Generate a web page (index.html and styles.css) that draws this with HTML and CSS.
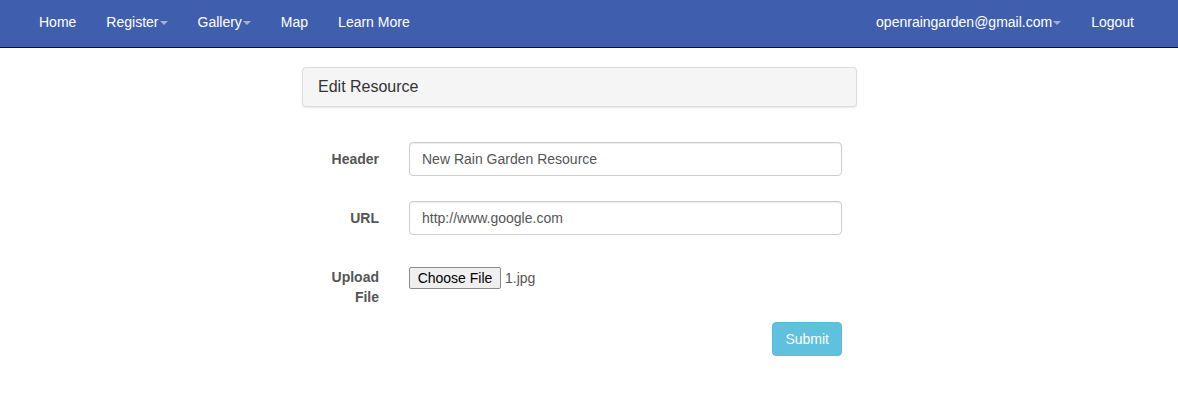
FILE: index.html
```html
<!DOCTYPE html>
<html>
<head>
<meta charset="utf-8">
<link rel="stylesheet" href="styles.css">
</head>
<body>
<nav class="navbar">
  <ul class="nav">
    <li><a href="#">Home</a></li>
    <li><a href="#">Register<span class="caret"></span></a></li>
    <li><a href="#">Gallery<span class="caret"></span></a></li>
    <li><a href="#">Map</a></li>
    <li><a href="#">Learn More</a></li>
  </ul>
  <ul class="nav">
    <li><a href="#">openraingarden@gmail.com<span class="caret"></span></a></li>
    <li><a href="#">Logout</a></li>
  </ul>
</nav>
<main class="page">
  <div class="panel"><h3 class="panel-title">Edit Resource</h3></div>
  <form class="form">
    <div class="row">
      <label class="label">Header</label>
      <div class="field"><input class="input" type="text" value="New Rain Garden Resource"></div>
    </div>
    <div class="row">
      <label class="label">URL</label>
      <div class="field"><input class="input" type="text" value="http://www.google.com"></div>
    </div>
    <div class="row">
      <label class="label">Upload File</label>
      <div class="field file"><button type="button" class="file-btn">Choose File</button><span class="file-name">1.jpg</span></div>
    </div>
    <div class="actions"><button type="button" class="submit">Submit</button></div>
  </form>
</main>
</body>
</html>
```
FILE: styles.css
```css
* { box-sizing: border-box; }
html, body { margin: 0; padding: 0; }
body {
  font-family: "Liberation Sans", Arial, sans-serif;
  font-size: 14px;
  line-height: 20px;
  color: #333;
  background: #fff;
}
.navbar {
  display: flex;
  justify-content: space-between;
  background: #3f5fae;
  border-bottom: 1px solid #111;
  height: 48px;
  padding: 0 29px 0 24px;
}
.nav {
  display: flex;
  list-style: none;
  margin: 0;
  padding: 0;
}
.nav a {
  display: flex;
  align-items: center;
  height: 47px;
  padding: 0 15px 3px;
  color: #fff;
  text-decoration: none;
}
.caret {
  display: inline-block;
  width: 0;
  height: 0;
  margin-left: 1px;
  margin-top: 2px;
  border-top: 4px solid #a7b0c8;
  border-left: 4px solid transparent;
  border-right: 4px solid transparent;
}
.page {
  width: 555px;
  margin-left: 302px;
  padding-top: 19px;
}
.panel {
  background: #f5f5f5;
  border: 1px solid #ddd;
  border-radius: 4px;
  box-shadow: 0 1px 2px rgba(0,0,0,0.1);
  padding: 10px 15px;
}
.panel-title {
  margin: 0;
  font-size: 16px;
  font-weight: normal;
  line-height: 18px;
  color: #333;
}
.form { padding-top: 35px; }
.row {
  display: flex;
  margin-bottom: 25px;
}
.row:nth-child(3) { margin-bottom: 15px; }
.label {
  width: 92px;
  flex: none;
  padding: 7px 15px 0;
  text-align: right;
  font-weight: bold;
  color: #555;
}
.field {
  flex: 1;
  padding: 0 15px;
}
.input {
  display: block;
  width: 100%;
  height: 34px;
  padding: 6px 12px;
  font: 14px/20px "Liberation Sans", Arial, sans-serif;
  color: #555;
  background: #fff;
  border: 1px solid #ccc;
  border-radius: 4px;
  box-shadow: inset 0 1px 1px rgba(0,0,0,0.075);
}
.file {
  display: flex;
  align-items: center;
  padding-top: 7px;
  align-self: flex-start;
}
.file-btn {
  height: 22px;
  width: 92px;
  padding: 0;
  font: 14px "Liberation Sans", Arial, sans-serif;
  color: #000;
  background: #efefef;
  border: 1px solid #8a8a8a;
  border-radius: 2px;
}
.file-name {
  margin-left: 4px;
  color: #555;
}
.actions {
  display: flex;
  justify-content: flex-end;
  padding-right: 15px;
}
.submit {
  height: 34px;
  padding: 6px 12px;
  font: 14px/20px "Liberation Sans", Arial, sans-serif;
  color: #fff;
  background: #5fc1de;
  border: 1px solid #56bcdb;
  border-radius: 4px;
}
```
